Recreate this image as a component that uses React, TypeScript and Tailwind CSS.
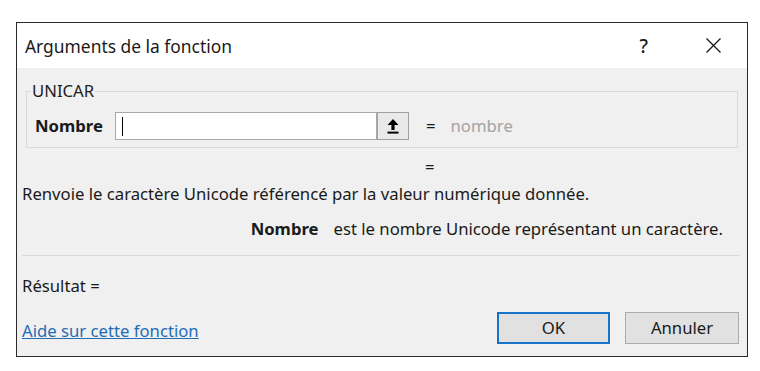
import React from 'react';

function UploadArrow() {
  return (
    <svg width="12" height="15" viewBox="0 0 12 15" className="block">
      <path d="M6 0 L11.5 6 L7.6 6 L7.6 11 L4.4 11 L4.4 6 L0.5 6 Z" fill="#000" />
      <rect x="0.5" y="12.6" width="11" height="2" fill="#000" />
    </svg>
  );
}

export default function App() {
  return (
    <div className="w-[760px] h-[371px] bg-white pt-[22px] pl-[16px] font-['Noto_Sans',sans-serif] text-[#1a1a1a]">
      {/* fenêtre de dialogue */}
      <div className="w-[732px] h-[335px] border border-[#2a2a2a] flex flex-col bg-[#f0f0f0]">
        {/* barre de titre */}
        <div className="h-[45px] bg-white flex items-center pl-[8px] shrink-0">
          <span className="text-[17.4px] leading-[22px]">Arguments de la fonction</span>
          <span className="ml-auto text-[19px] leading-[22px] font-medium mr-[58px]">?</span>
          <svg width="15" height="15" viewBox="0 0 15 15" className="mr-[26px]">
            <path d="M0.5 0.5 L14.5 14.5 M14.5 0.5 L0.5 14.5" stroke="#111" strokeWidth="1.2" />
          </svg>
        </div>

        {/* corps */}
        <div className="flex-1 px-[5px] text-[16.7px] leading-[20px]">
          {/* groupe UNICAR */}
          <div className="relative mt-[23px] ml-[4px] mr-[4px] h-[57px] border border-[#dadada]">
            <span className="absolute -top-[11px] left-[4px] px-[1px] bg-[#f0f0f0] leading-[20px] text-[#222]">UNICAR</span>
            <div className="flex items-center h-[28px] mt-[20px]">
              <span className="ml-[8px] w-[80px] font-bold">Nombre</span>
              <div className="w-[262px] h-[28px] bg-white border border-[#a9a9a9] flex items-center pl-[6px]">
                <span className="w-[1px] h-[19px] bg-black" />
              </div>
              <div className="w-[32px] h-[28px] border border-[#a0a0a0] bg-[#e9e9e9] flex items-center justify-center">
                <UploadArrow />
              </div>
              <span className="ml-[17px]">=</span>
              <span className="ml-[15px] text-[#a3a3a3]">nombre</span>
            </div>
          </div>

          <div className="mt-[9px] pl-[403px]">=</div>

          <p className="mt-[7px]">Renvoie le caractère Unicode référencé par la valeur numérique donnée.</p>

          <p className="mt-[15px] mr-[19px] text-right">
            <span className="font-bold">Nombre</span>
            <span className="ml-[15px]">est le nombre Unicode représentant un caractère.</span>
          </p>

          <div className="mt-[16px] h-[1px] bg-[#d9d9d9] mr-[2px]" />

          <p className="mt-[20px]">Résultat =</p>

          <div className="mt-[16px] flex items-center">
            <a className="mt-[6px] text-[#1f6db5] underline underline-offset-1 cursor-pointer">Aide sur cette fonction</a>
            <button className="ml-auto w-[113px] h-[32px] border-2 border-[#1874c8] bg-[#e1e1e1]">OK</button>
            <button className="ml-[15px] mr-[3px] w-[114px] h-[32px] border border-[#adadad] bg-[#e1e1e1]">Annuler</button>
          </div>
        </div>
      </div>
    </div>
  );
}
